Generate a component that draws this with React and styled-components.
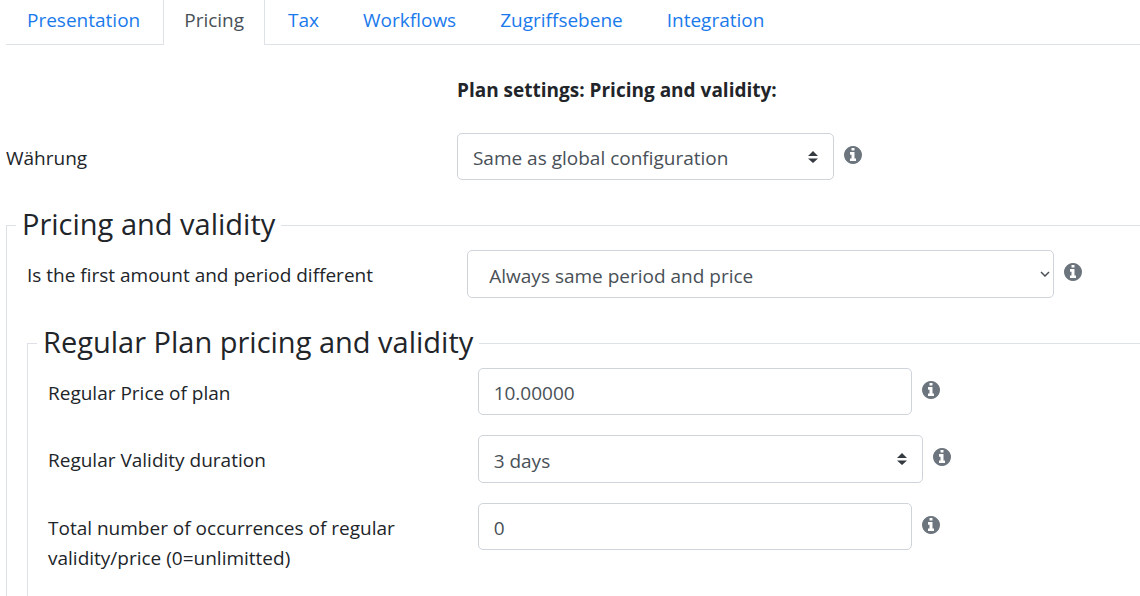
import React, { useState } from "react";
import styled, { createGlobalStyle } from "styled-components";

const GlobalStyle = createGlobalStyle`
  *, *::before, *::after {
    box-sizing: border-box;
  }
  body {
    margin: 0;
    background: #fff;
    color: #212529;
    font-family: "Open Sans", "Noto Sans", sans-serif;
    font-size: 19px;
    line-height: 30px;
  }
`;

const Viewport = styled.div`
  overflow: hidden;
`;

// the form is wider than the window, the rest is cut off on the right
const Page = styled.main`
  display: flex;
  flex-direction: column;
  width: 119.2%;
  min-height: 100vh;
  padding-left: 6px;
`;

const Tabs = styled.nav`
  display: flex;
  gap: 2px;
  height: 45px;
  border-bottom: 1px solid #dee2e6;
`;

const Tab = styled.a`
  height: 45px;
  padding: 5px 20px 0;
  border: solid ${(props) => (props.$active ? "#dee2e6" : "transparent")};
  border-width: 0 1px;
  background: ${(props) => (props.$active ? "#fff" : "transparent")};
  color: ${(props) => (props.$active ? "#495057" : "#1a7aec")};
  text-decoration: none;
  white-space: nowrap;
`;

const Title = styled.h1`
  margin: 30px 0 28px;
  padding-left: calc(100% / 3);
  font-size: 19px;
  font-weight: 700;
  line-height: 30px;
`;

const Row = styled.div`
  display: flex;
  align-items: flex-start;
  margin-bottom: ${(props) => props.$space || 20}px;
`;

const Label = styled.label`
  flex: 0 0 calc(100% / 3);
  padding: 10px 60px 0 0;
`;

const ControlCell = styled.div`
  display: flex;
  flex: 1;
  gap: 10px;
`;

const SelectWrap = styled.div`
  position: relative;
  flex: 0 1 ${(props) => props.$width}px;
`;

const SelectBox = styled.select`
  appearance: none;
  display: block;
  width: 100%;
  height: ${(props) => props.$height || 48}px;
  padding: 3px 40px 0 ${(props) => (props.$plain ? 21 : 15)}px;
  border: 1px solid #ced4da;
  border-radius: 5px;
  background: #fff;
  color: #495057;
  font: inherit;
`;

const Arrow = styled.svg`
  position: absolute;
  top: 50%;
  right: ${(props) => props.$right}px;
  transform: translateY(-50%);
  pointer-events: none;
`;

const TextInput = styled.input`
  flex: 0 1 434px;
  min-width: 0;
  height: 47px;
  padding: 3px 15px 0;
  border: 1px solid #ced4da;
  border-radius: 5px;
  color: #495057;
  font: inherit;
`;

const InfoSvg = styled.svg`
  flex: none;
  width: 18px;
  height: 18px;
  margin-top: 13px;
  fill: #6c757d;
`;

const Fieldset = styled.fieldset`
  flex: 1;
  min-width: 0;
  margin: 0;
  padding: 7px 10px 0 20px;
  border: 1px solid #dee2e6;
  border-bottom: 0;
`;

const Legend = styled.legend`
  margin-left: -11px;
  padding: 0 6px 2px;
  font-size: 29px;
  line-height: 34px;
`;

const tabs = [
  "Presentation",
  "Pricing",
  "Tax",
  "Workflows",
  "Zugriffsebene",
  "Integration",
];

const InfoIcon = () => (
  <InfoSvg viewBox="0 0 1536 1536" aria-hidden="true">
    <path d="M1024 1248v-160q0-14-9-23t-23-9h-96v-512q0-14-9-23t-23-9h-320q-14 0-23 9t-9 23v160q0 14 9 23t23 9h96v320h-96q-14 0-23 9t-9 23v160q0 14 9 23t23 9h448q14 0 23-9t9-23zm-128-896v-160q0-14-9-23t-23-9h-192q-14 0-23 9t-9 23v160q0 14 9 23t23 9h192q14 0 23-9t9-23zm640 416q0 209-103 385.5t-279.5 279.5-385.5 103-385.5-103-279.5-279.5-103-385.5 103-385.5 279.5-279.5 385.5-103 385.5 103 279.5 279.5 103 385.5z" />
  </InfoSvg>
);

const Select = ({ id, width, height, plain, options }) => (
  <SelectWrap $width={width}>
    <SelectBox id={id} $height={height} $plain={plain}>
      {options.map((option) => (
        <option key={option}>{option}</option>
      ))}
    </SelectBox>
    {plain ? (
      <Arrow $right={4} width="10" height="6" viewBox="0 0 10 6">
        <path d="M1 1l4 4 4-4" fill="none" stroke="#495057" strokeWidth="1.5" />
      </Arrow>
    ) : (
      <Arrow $right={16} width="10" height="12" viewBox="0 0 10 12">
        <path d="M0 5l5-5 5 5zM0 7.5h10l-5 4.5z" fill="#343a40" />
      </Arrow>
    )}
  </SelectWrap>
);

const Field = ({ id, label, space, children }) => (
  <Row $space={space}>
    <Label htmlFor={id}>{label}</Label>
    <ControlCell>
      {children}
      <InfoIcon />
    </ControlCell>
  </Row>
);

const App = () => {
  const [activeTab, setActiveTab] = useState("Pricing");
  const [price, setPrice] = useState("10.00000");
  const [occurrences, setOccurrences] = useState("0");

  return (
    <Viewport>
      <GlobalStyle />
      <Page>
        <Tabs>
          {tabs.map((tab) => (
            <Tab
              key={tab}
              href="#"
              $active={tab === activeTab}
              onClick={() => setActiveTab(tab)}
            >
              {tab}
            </Tab>
          ))}
        </Tabs>
        <Title>Plan settings: Pricing and validity:</Title>
        <Field id="currency" label="Währung" space={27}>
          <Select
            id="currency"
            width={377}
            height={47}
            options={["Same as global configuration"]}
          />
        </Field>
        <Fieldset>
          <Legend>Pricing and validity</Legend>
          <Field
            id="first_different"
            label="Is the first amount and period different"
            space={27}
          >
            <Select
              id="first_different"
              width={587}
              plain
              options={["Always same period and price"]}
            />
          </Field>
          <Fieldset>
            <Legend>Regular Plan pricing and validity</Legend>
            <Field id="price" label="Regular Price of plan">
              <TextInput
                id="price"
                value={price}
                onChange={(e) => setPrice(e.target.value)}
              />
            </Field>
            <Field id="validity" label="Regular Validity duration">
              <Select id="validity" width={445} options={["3 days"]} />
            </Field>
            <Field
              id="occurrences"
              label="Total number of occurrences of regular validity/price (0=unlimitted)"
              space={23}
            >
              <TextInput
                id="occurrences"
                value={occurrences}
                onChange={(e) => setOccurrences(e.target.value)}
              />
            </Field>
          </Fieldset>
        </Fieldset>
      </Page>
    </Viewport>
  );
};

export default App;
